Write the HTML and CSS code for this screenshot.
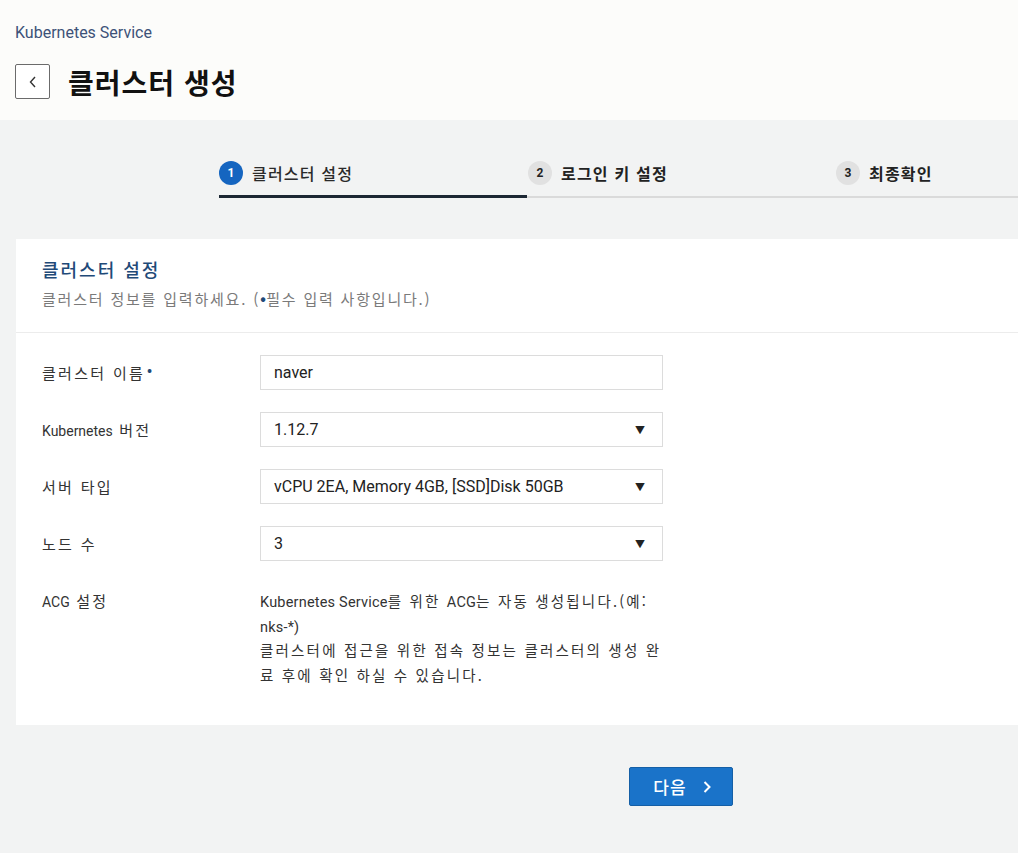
FILE: index.html
```html
<!DOCTYPE html>
<html lang="ko">
<head>
<meta charset="utf-8">
<title>클러스터 생성</title>
<link rel="stylesheet" href="styles.css">
</head>
<body>
<header class="page-header">
  <div class="breadcrumb">Kubernetes Service</div>
  <div class="title-row">
    <button class="back-btn" aria-label="뒤로">
      <svg width="10" height="14" viewBox="0 0 10 14"><path d="M7 2 L2.5 7 L7 12" fill="none" stroke="#333" stroke-width="1.4"/></svg>
    </button>
    <h1 class="page-title">클러스터 생성</h1>
  </div>
</header>

<main class="content">
  <nav class="steps">
    <div class="step active"><span class="num">1</span><span class="label">클러스터 설정</span></div>
    <div class="step"><span class="num">2</span><span class="label">로그인 키 설정</span></div>
    <div class="step"><span class="num">3</span><span class="label">최종확인</span></div>
  </nav>

  <section class="card">
    <div class="card-head">
      <h2 class="card-title">클러스터 설정</h2>
      <p class="card-desc">클러스터 정보를 입력하세요. (<span class="dot">•</span>필수 입력 사항입니다.)</p>
    </div>
    <div class="form">
      <div class="row">
        <div class="lbl">클러스터 이름<span class="req">•</span></div>
        <div class="field input">naver</div>
      </div>
      <div class="row">
        <div class="lbl"><span class="en">Kubernetes</span> 버전</div>
        <div class="field select"><span>1.12.7</span><span class="caret">▼</span></div>
      </div>
      <div class="row">
        <div class="lbl">서버 타입</div>
        <div class="field select"><span>vCPU 2EA, Memory 4GB, [SSD]Disk 50GB</span><span class="caret">▼</span></div>
      </div>
      <div class="row">
        <div class="lbl">노드 수</div>
        <div class="field select"><span>3</span><span class="caret">▼</span></div>
      </div>
      <div class="row acg">
        <div class="lbl"><span class="en">ACG</span> 설정</div>
        <div class="acg-text">
          <p><span class="en">Kubernetes Service</span>를 위한 <span class="en">ACG</span>는 자동 생성됩니다.(예: <span class="en nw">nks-*)</span></p>
          <p class="ko">클러스터에 접근을 위한 접속 정보는 클러스터의 생성 완료 후에 확인 하실 수 있습니다.</p>
        </div>
      </div>
    </div>
  </section>

  <div class="actions">
    <button class="next-btn">다음 <svg width="12" height="14" viewBox="0 0 12 14"><path d="M3.5 2 L8.5 7 L3.5 12" fill="none" stroke="#fff" stroke-width="2"/></svg></button>
  </div>
</main>
</body>
</html>
```

FILE: styles.css
```css
* { box-sizing: border-box; }
html, body { margin: 0; padding: 0; }
body {
  font-family: Roboto, "Noto Sans CJK KR", sans-serif;
  background: #f2f3f3;
  color: #222;
  overflow: hidden;
  width: 1018px;
  min-height: 853px;
}
.page-header {
  background: #fcfcfa;
  height: 120px;
  padding: 24px 0 0 15px;
}
.breadcrumb {
  font-size: 16px;
  color: #3c5278;
  line-height: 18px;
}
.title-row {
  display: flex;
  align-items: center;
  margin-top: 22px;
}
.back-btn {
  width: 35px;
  height: 35px;
  border: 1px solid #6b6b6b;
  border-radius: 2px;
  background: #fff;
  display: flex;
  align-items: center;
  justify-content: center;
  padding: 0;
}
.page-title {
  margin: 0 0 0 18px;
  font-family: "Noto Sans CJK KR", sans-serif;
  font-size: 28px;
  letter-spacing: 1px;
  font-weight: 700;
  color: #111;
  line-height: 34px;
}
.content { padding-top: 41px; overflow: hidden; }
.steps {
  display: flex;
  margin-left: 219px;
  width: 924px;
  border-bottom: 2px solid #dadada;
}
.step {
  flex: 0 0 308px;
  display: flex;
  align-items: center;
  height: 24px;
  margin-bottom: 11px;
  font-family: "Noto Sans CJK KR", sans-serif;
}
.step.active {
  position: relative;
}
.step.active::after {
  content: "";
  position: absolute;
  left: 0;
  right: 0;
  bottom: -13px;
  height: 3px;
  background: #1c2733;
}
.step:not(:first-child) { padding-left: 1px; }
.num {
  width: 24px;
  height: 24px;
  border-radius: 50%;
  background: #e1e1e1;
  color: #222;
  font-family: Roboto, sans-serif;
  font-size: 12px;
  font-weight: 700;
  display: flex;
  align-items: center;
  justify-content: center;
  margin-right: 9px;
}
.step.active .num { background: #1565c0; color: #fff; }
.label { font-size: 16px; letter-spacing: 1.2px; font-weight: 700; color: #222; }
.step.active .label { font-weight: 500; color: #2a2a2a; }

.card {
  margin: 41px 0 0 16px;
  background: #fff;
  padding-bottom: 38px;
}
.card-head {
  padding: 17px 26px 22px;
  border-bottom: 1px solid #ececec;
}
.card-title {
  margin: 0;
  font-family: "Noto Sans CJK KR", sans-serif;
  font-size: 18px;
  letter-spacing: 2px;
  font-weight: 500;
  color: #1f4a78;
  line-height: 26px;
}
.card-desc {
  margin: 6px 0 0;
  font-family: "Noto Sans CJK KR", sans-serif;
  font-size: 15px;
  letter-spacing: 1.8px;
  color: #7a7a7a;
  line-height: 22px;
}
.dot { color: #1f4a78; font-size: 18px; line-height: 1; letter-spacing: 0; }
.form { padding: 22px 26px 0; }
.row {
  display: flex;
  align-items: center;
  margin-bottom: 22px;
}
.lbl {
  width: 218px;
  font-size: 15px;
  letter-spacing: 2.3px;
  color: #333;
  font-family: "Noto Sans CJK KR", sans-serif;
  line-height: 24px;
}
.lbl .en { font-family: Roboto, sans-serif; font-size: 14px; letter-spacing: 0; line-height: 1; }
.req { color: #1f4a78; font-size: 15px; vertical-align: 4px; margin-left: 2px; letter-spacing: 0; line-height: 1; }
.field {
  width: 403px;
  height: 35px;
  border: 1px solid #dcdcdc;
  background: #fff;
  display: flex;
  align-items: center;
  justify-content: space-between;
  padding: 0 15px 0 13px;
  font-size: 16px;
  color: #222;
}
.caret { font-size: 10px; color: #222; margin-right: 2px; }
.row.acg { align-items: flex-start; margin-bottom: 0; padding-top: 6px; }
.acg-text {
  width: 407px;
  font-size: 14.5px;
  letter-spacing: 2.2px;
  line-height: 24.6px;
  color: #333;
  font-family: "Noto Sans CJK KR", sans-serif;
}
.acg-text .en { font-family: Roboto, sans-serif; letter-spacing: 0.2px; line-height: 1; }
.acg-text .nw { white-space: nowrap; }
.acg-text .ko { word-break: break-all; }
.acg-text p { margin: 0; }
.actions {
  margin-left: 219px;
  width: 924px;
  display: flex;
  justify-content: center;
  padding-top: 42px;
}
.next-btn {
  width: 104px;
  height: 39px;
  background: #1a73c9;
  border: 1px solid #155fa6;
  border-radius: 2px;
  color: #fff;
  font-family: "Noto Sans CJK KR", sans-serif;
  font-size: 17px;
  letter-spacing: 1px;
  font-weight: 500;
  display: flex;
  align-items: center;
  justify-content: center;
  gap: 14px;
  padding: 0 0 0 4px;
}
```
